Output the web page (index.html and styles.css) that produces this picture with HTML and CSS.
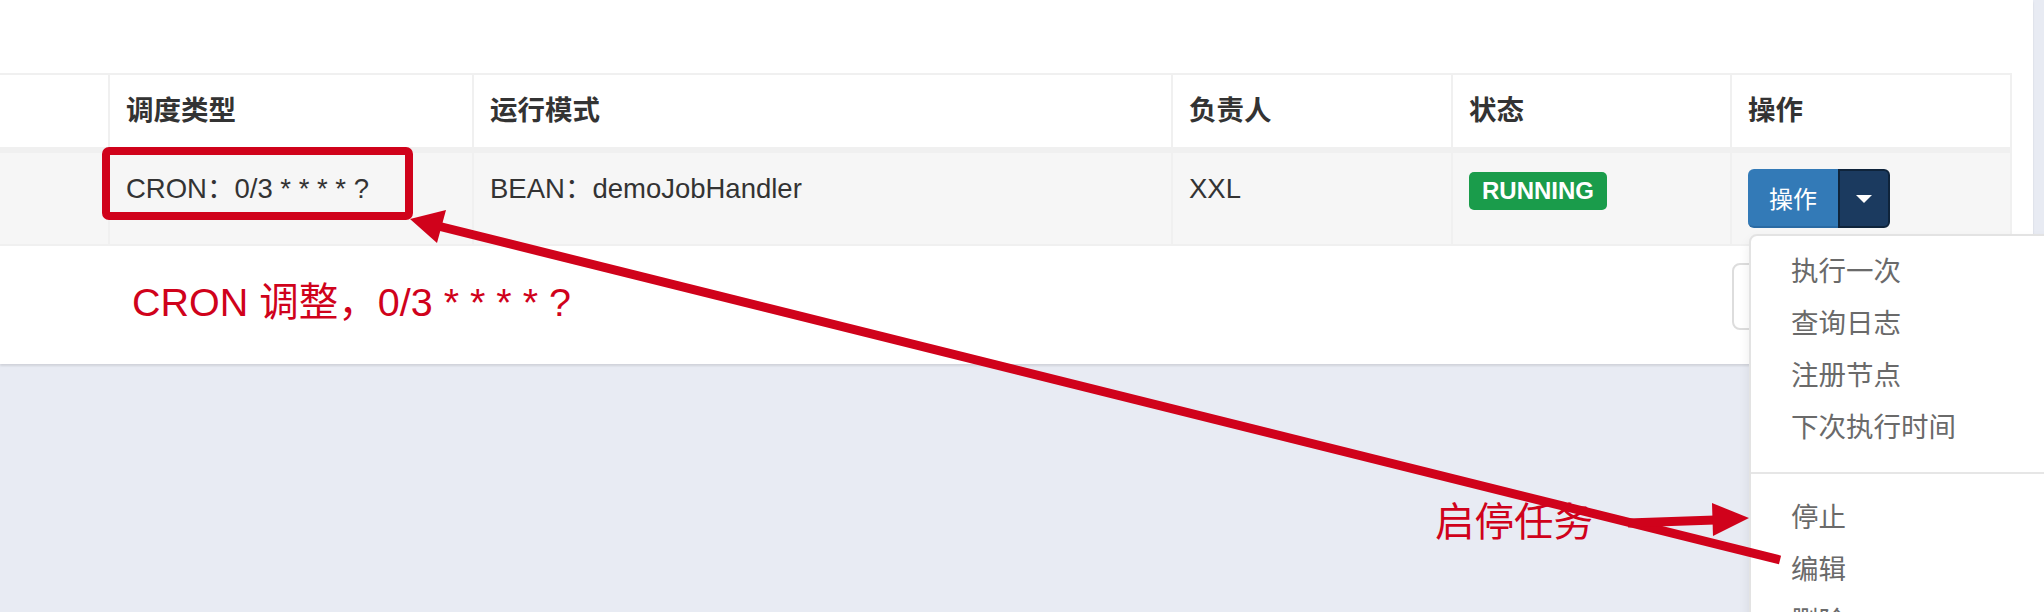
FILE: index.html
```html
<!DOCTYPE html>
<html lang="zh-CN">
<head>
<meta charset="utf-8">
<title>任务管理</title>
<link rel="stylesheet" href="styles.css">
</head>
<body>
<div class="page">
  <div class="panel">
    <div class="table">
      <div class="row head">
        <div class="cell first"></div>
        <div class="cell">调度类型</div>
        <div class="cell">运行模式</div>
        <div class="cell">负责人</div>
        <div class="cell">状态</div>
        <div class="cell">操作</div>
      </div>
      <div class="row data">
        <div class="cell first"></div>
        <div class="cell">CRON：0/3 * * * * ?</div>
        <div class="cell">BEAN：demoJobHandler</div>
        <div class="cell">XXL</div>
        <div class="cell"><span class="label">RUNNING</span></div>
        <div class="cell">
          <div class="btn-group">
            <button class="btn main">操作</button>
            <button class="btn toggle"><span class="caret"></span></button>
            <ul class="menu">
              <li>执行一次</li>
              <li>查询日志</li>
              <li>注册节点</li>
              <li>下次执行时间</li>
              <li class="divider"></li>
              <li>停止</li>
              <li>编辑</li>
              <li>删除</li>
            </ul>
          </div>
        </div>
      </div>
    </div>
    <div class="pager-row"><div class="pager"></div></div>
  </div>

  <div class="note note-cron">CRON 调整，0/3 * * * * ?</div>
  <div class="note note-stop">启停任务</div>

  <svg class="marks" width="2044" height="612" viewBox="0 0 2044 612">
    <rect x="106" y="151" width="303" height="65" rx="3" fill="none" stroke="#d0021b" stroke-width="8"/>
    <line x1="1780" y1="560" x2="438" y2="226" stroke="#d0021b" stroke-width="9"/>
    <polygon points="410,219 446,210 437,243" fill="#d0021b"/>
    <line x1="1628" y1="523" x2="1715" y2="520" stroke="#d0021b" stroke-width="9"/>
    <polygon points="1749,518 1712,503 1713,536" fill="#d0021b"/>
  </svg>
</div>
</body>
</html>
```

FILE: styles.css
```css
* { box-sizing: border-box; }

html, body {
  margin: 0;
  padding: 0;
}

body {
  width: 2044px;
  height: 612px;
  overflow: hidden;
  background: #e8ebf3;
  font-family: "Liberation Sans", "Noto Sans CJK SC", sans-serif;
  color: #333;
}

.page {
  position: relative;
  width: 2044px;
  height: 612px;
}

.panel {
  width: 2033px;
  background: #fff;
  padding: 73px 21px 34px 0;
  box-shadow: 0 2px 2px rgba(0, 0, 0, 0.1);
}

.table {
  border-top: 2px solid #f0f0f0;
  border-right: 2px solid #f0f0f0;
  border-bottom: 2px solid #f0f0f0;
}

.row {
  display: grid;
  grid-template-columns: 108px 364px 699px 280px 279px 280px;
}

.cell {
  border-left: 2px solid #f0f0f0;
  padding: 16px 16px;
  font-size: 27.5px;
  line-height: 40px;
  white-space: nowrap;
}

.cell.first {
  border-left: none;
}

.head .cell {
  font-weight: bold;
  background: #fff;
}

.head {
  border-bottom: 6px solid #f0f0f0;
}

.data .cell {
  background: #f6f6f6;
}

.label {
  display: inline-block;
  vertical-align: top;
  margin-top: 3px;
  height: 38px;
  line-height: 38px;
  padding: 0 13px;
  background: #1a9c4b;
  color: #fff;
  font-weight: bold;
  font-size: 24px;
  border-radius: 5px;
}

.btn-group {
  position: relative;
  display: inline-flex;
  vertical-align: top;
  height: 59px;
}

.btn {
  border: none;
  margin: 0;
  padding: 0;
  height: 59px;
  font-family: "Liberation Sans", "Noto Sans CJK SC", sans-serif;
  color: #fff;
  display: flex;
  align-items: center;
  justify-content: center;
}

.btn.main {
  width: 90px;
  background: #337ab7;
  font-size: 24px;
  border-radius: 6px 0 0 6px;
  border-bottom: 2px solid #2a6aa3;
}

.btn.toggle {
  width: 52px;
  background: #1b3a5f;
  border: 2px solid #0f243b;
  border-radius: 0 6px 6px 0;
}

.caret {
  width: 0;
  height: 0;
  border-top: 8px solid #fff;
  border-left: 8px solid transparent;
  border-right: 8px solid transparent;
}

.menu {
  position: absolute;
  top: 65px;
  left: 1px;
  z-index: 5;
  width: 320px;
  margin: 0;
  padding: 10px 0;
  list-style: none;
  background: #fff;
  border: 2px solid #e3e3e3;
  border-radius: 8px;
  box-shadow: 0 6px 12px rgba(0, 0, 0, 0.08);
}

.menu li {
  height: 52px;
  line-height: 52px;
  padding: 0 40px;
  font-size: 27.5px;
  color: #6a6a6a;
  white-space: nowrap;
}

.menu li.divider {
  height: 2px;
  margin: 18px 0;
  padding: 0;
  background: #e6e6e6;
}

.pager-row {
  display: flex;
  justify-content: flex-end;
  margin-top: 17px;
}

.pager {
  width: 280px;
  height: 67px;
  border: 2px solid #dddddd;
  border-radius: 8px;
}

.note {
  position: absolute;
  z-index: 8;
  color: #d0021b;
  font-size: 39.5px;
  line-height: 48px;
  white-space: nowrap;
}

.note-cron {
  left: 132px;
  top: 278px;
}

.note-stop {
  left: 1435px;
  top: 498px;
}

.marks {
  position: absolute;
  left: 0;
  top: 0;
  z-index: 10;
  pointer-events: none;
}
```
